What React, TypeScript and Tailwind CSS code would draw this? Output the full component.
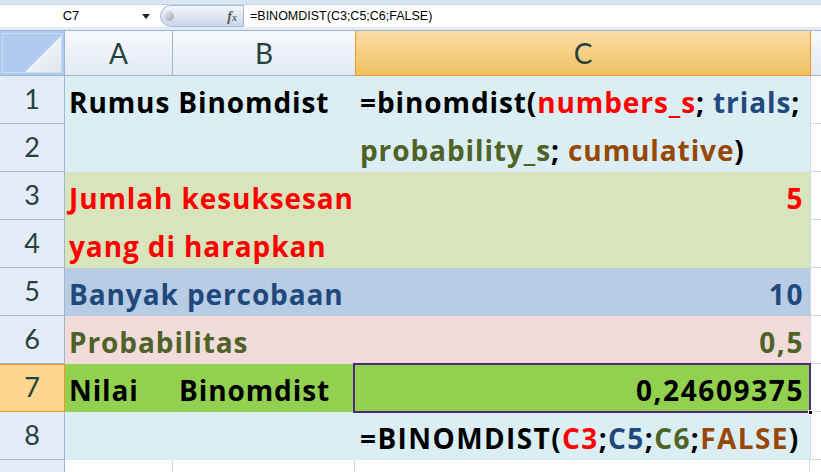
import type { ReactNode } from 'react'

const cellFont = { fontFamily: '"Open Sans", Lato, sans-serif' }
const headFont = { fontFamily: 'Lato, "Open Sans", sans-serif' }

function Row({ n, bg, active, children }: { n: number; bg: string; active?: boolean; children: ReactNode }) {
  return (
    <div className="flex h-[48px]">
      <div
        className={`w-[65px] shrink-0 border-r border-b flex items-center justify-center text-[27px] text-[#27413e] ${
          active ? 'bg-[#ffd68f] border-[#f29436] shadow-[inset_0_1px_0_#f29436]' : 'bg-[#e4ecf7] border-[#9eb6ce]'
        }`}
        style={headFont}
      >
        {n}
      </div>
      <div className={`w-[745px] shrink-0 flex font-bold text-[28px] leading-none tracking-[0.9px] ${bg}`}>{children}</div>
      <div className="flex-1 border-l border-b border-[#d0d7e5] bg-white" />
    </div>
  )
}

function Cell({ w, right, children }: { w: string; right?: boolean; children?: ReactNode }) {
  return (
    <div
      className={`${w} flex items-end pb-[8px] whitespace-nowrap ${
        right ? 'justify-end pr-[6px] tracking-[1.6px]' : 'pl-[4px]'
      }`}
    >
      {children}
    </div>
  )
}

export default function App() {
  return (
    <div className="w-[821px] h-[472px] overflow-hidden bg-white" style={cellFont}>
      {/* formula bar */}
      <div className="h-[5px] bg-[#dbe6f4] border-b border-[#c5d5e8]" />
      <div className="h-[22px] flex bg-white">
        <div className="w-[142px] flex items-center justify-center text-[13px] text-black" style={{ fontFamily: '"Liberation Sans", sans-serif' }}>
          C7
        </div>
        <div className="w-[18px] flex items-center">
          <svg width="8" height="5" viewBox="0 0 8 5">
            <path d="M0 0h8L4 5z" fill="#222" />
          </svg>
        </div>
        <div className="w-[84px] flex items-center justify-between rounded-l-full border border-[#a7b9d1] bg-gradient-to-b from-[#f4f7fb] to-[#c9d6e8] pl-[3px] pr-[6px]">
          <div className="w-[10px] h-[10px] rounded-full bg-gradient-to-br from-[#f0f0f0] to-[#9aa4b0]" />
          <span className="text-[14px] italic font-bold text-[#5a5a5a]" style={{ fontFamily: '"Liberation Serif", serif' }}>
            f<span className="text-[10px]">x</span>
          </span>
        </div>
        <div className="flex-1 flex items-center pl-[6px] text-[12.5px] text-black" style={{ fontFamily: '"Liberation Sans", sans-serif' }}>
          =BINOMDIST(C3;C5;C6;FALSE)
        </div>
      </div>
      <div className="h-[4px] bg-[#e3ebf6] border-b border-[#9eb6ce]" />

      {/* column headers */}
      <div className="flex h-[45px] text-[28px] text-[#27413e]" style={headFont}>
        <div className="w-[65px] shrink-0 border-r border-b border-[#9eb6ce] bg-[#afcbef] p-[2px]">
          <div className="h-full border border-[#c9dcf5] flex items-end justify-end">
            <svg width="36" height="36" viewBox="0 0 36 36">
              <defs>
                <linearGradient id="tri" x1="0" y1="0" x2="1" y2="1">
                  <stop offset="0" stopColor="#ffffff" />
                  <stop offset="1" stopColor="#dfe6ef" />
                </linearGradient>
              </defs>
              <path d="M0 36L36 0V36Z" fill="url(#tri)" />
            </svg>
          </div>
        </div>
        <div className="w-[108px] shrink-0 border-r border-b border-[#9eb6ce] bg-gradient-to-b from-[#f7f9fc] to-[#e3eaf4] flex items-center justify-center">
          A
        </div>
        <div className="w-[182px] shrink-0 border-b border-[#9eb6ce] bg-gradient-to-b from-[#f7f9fc] to-[#e3eaf4] flex items-center justify-center">
          B
        </div>
        <div className="w-[456px] shrink-0 border-x border-b border-[#f29436] bg-gradient-to-b from-[#f9dca5] to-[#f1c15d] flex items-center justify-center">
          C
        </div>
        <div className="flex-1 border-b border-[#9eb6ce] bg-gradient-to-b from-[#f7f9fc] to-[#e3eaf4]" />
      </div>

      <Row n={1} bg="bg-[#daeef3]">
        <Cell w="w-[290px]">Rumus Binomdist</Cell>
        <Cell w="flex-1">
          <span className="pl-[1px]">
            =binomdist(<span className="text-[#ff0000]">numbers_s</span>; <span className="text-[#1f497d]">trials</span>;
          </span>
        </Cell>
      </Row>
      <Row n={2} bg="bg-[#daeef3]">
        <Cell w="w-[290px]" />
        <Cell w="flex-1">
          <span className="pl-[1px]">
            <span className="text-[#4f6228]">probability_s</span>; <span className="text-[#974806]">cumulative</span>)
          </span>
        </Cell>
      </Row>
      <Row n={3} bg="bg-[#d7e4bc]">
        <Cell w="w-[290px]">
          <span className="text-[#ff0000]">Jumlah kesuksesan</span>
        </Cell>
        <Cell w="flex-1" right>
          <span className="text-[#ff0000]">5</span>
        </Cell>
      </Row>
      <Row n={4} bg="bg-[#d7e4bc]">
        <Cell w="w-[290px]">
          <span className="text-[#ff0000]">yang di harapkan</span>
        </Cell>
      </Row>
      <Row n={5} bg="bg-[#b8cce4]">
        <Cell w="w-[290px]">
          <span className="text-[#1f497d]">Banyak percobaan</span>
        </Cell>
        <Cell w="flex-1" right>
          <span className="text-[#1f497d]">10</span>
        </Cell>
      </Row>
      <Row n={6} bg="bg-[#f2dcdb]">
        <Cell w="w-[290px]">
          <span className="text-[#4f6228]">Probabilitas</span>
        </Cell>
        <Cell w="flex-1" right>
          <span className="text-[#4f6228]">0,5</span>
        </Cell>
      </Row>
      <Row n={7} bg="bg-[#92d050]" active>
        <Cell w="w-[108px]">Nilai</Cell>
        <Cell w="w-[182px]">
          <span className="pl-[2px]">Binomdist</span>
        </Cell>
        <div className="relative flex-1 flex items-end justify-end pb-[8px] pr-[6px] tracking-[1.6px]">
          0,24609375
          <div className="absolute -left-[2px] -top-[1px] -right-[1px] -bottom-[1px] border-2 border-[#4e2a7e]" />
          <div className="absolute -right-[3px] -bottom-[3px] w-[5px] h-[5px] bg-black border border-white" />
        </div>
      </Row>
      <Row n={8} bg="bg-[#daeef3]">
        <Cell w="w-[290px]" />
        <Cell w="flex-1">
          <span className="pl-[1px] tracking-[1.4px]">
            =BINOMDIST(<span className="text-[#ff0000]">C3</span>;<span className="text-[#1f497d]">C5</span>;
            <span className="text-[#4f6228]">C6</span>;<span className="text-[#974806]">FALSE</span>)
          </span>
        </Cell>
      </Row>
      <div className="flex h-[20px]">
        <div className="w-[65px] shrink-0 border-r border-[#9eb6ce] bg-[#e4ecf7]" />
        <div className="w-[108px] shrink-0 border-r border-[#d0d7e5]" />
        <div className="w-[182px] shrink-0 border-r border-[#d0d7e5]" />
        <div className="w-[455px] shrink-0 border-r border-[#d0d7e5]" />
        <div className="flex-1" />
      </div>
    </div>
  )
}
